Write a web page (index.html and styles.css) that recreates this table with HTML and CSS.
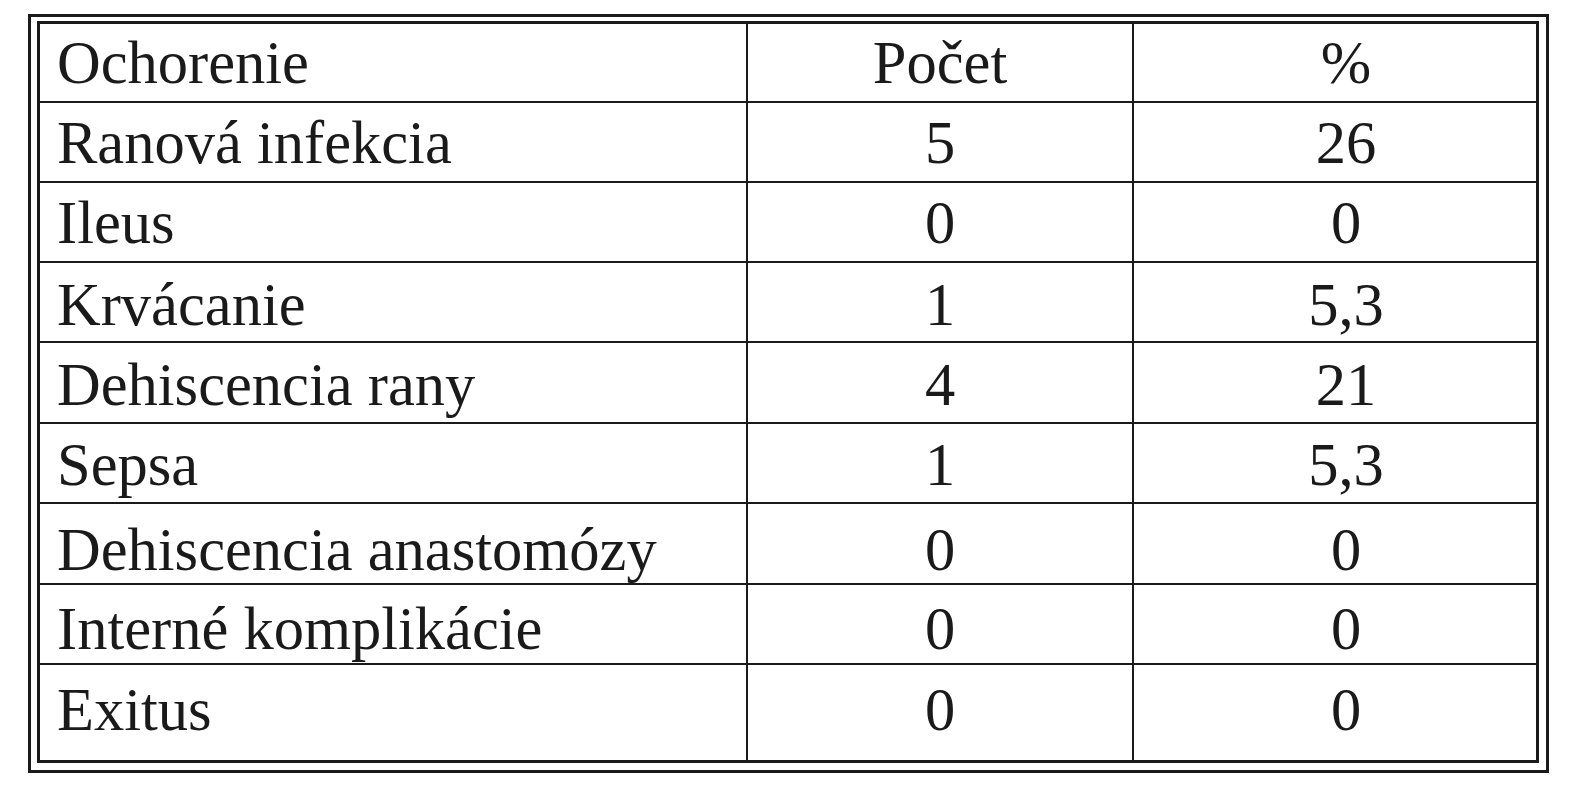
FILE: index.html
```html
<!DOCTYPE html>
<html lang="sk">
<head>
<meta charset="utf-8">
<title>Komplikácie</title>
<link rel="stylesheet" href="styles.css">
</head>
<body>
<div class="frame">
  <div class="grid">
    <div class="row"><div class="cell c1">Ochorenie</div><div class="cell c2">Počet</div><div class="cell c3">%</div></div>
    <div class="row"><div class="cell c1">Ranová infekcia</div><div class="cell c2">5</div><div class="cell c3">26</div></div>
    <div class="row"><div class="cell c1">Ileus</div><div class="cell c2">0</div><div class="cell c3">0</div></div>
    <div class="row"><div class="cell c1">Krvácanie</div><div class="cell c2">1</div><div class="cell c3">5,3</div></div>
    <div class="row"><div class="cell c1">Dehiscencia rany</div><div class="cell c2">4</div><div class="cell c3">21</div></div>
    <div class="row"><div class="cell c1">Sepsa</div><div class="cell c2">1</div><div class="cell c3">5,3</div></div>
    <div class="row"><div class="cell c1">Dehiscencia anastomózy</div><div class="cell c2">0</div><div class="cell c3">0</div></div>
    <div class="row"><div class="cell c1">Interné komplikácie</div><div class="cell c2">0</div><div class="cell c3">0</div></div>
    <div class="row last"><div class="cell c1">Exitus</div><div class="cell c2">0</div><div class="cell c3">0</div></div>
  </div>
</div>
</body>
</html>
```

FILE: styles.css
```css
html, body {
  margin: 0;
  padding: 0;
  background: #ffffff;
}

body {
  font-family: "Liberation Serif", "Times New Roman", serif;
  color: #1a1a1a;
}

.frame {
  margin: 14px 0 0 28px;
  width: fit-content;
  border: 3px solid #1a1a1a;
  padding: 4px 7px 7px 6px;
}

.grid {
  display: grid;
  grid-template-columns: 708px 386px 402px;
  grid-template-rows: 79px 80px 80px 80px 81px 80px 81px 80px 95px;
  border: 3px solid #1a1a1a;
}

.row {
  display: contents;
}

.cell {
  box-sizing: border-box;
  border-bottom: 2px solid #1a1a1a;
  border-right: 2px solid #1a1a1a;
  font-size: 60.5px;
  line-height: 60px;
  padding-top: 12px;
  white-space: nowrap;
}

.row.last .cell {
  border-bottom: none;
}

.c1 {
  padding-left: 17px;
}

.c2 {
  text-align: center;
}

.c3 {
  text-align: center;
  padding-left: 22px;
  border-right: none;
}

.row:nth-child(1) .cell { padding-top: 9px; }
.row:nth-child(2) .cell { padding-top: 10px; }
.row:nth-child(3) .cell { padding-top: 10px; }
.row:nth-child(4) .cell { padding-top: 12px; }
.row:nth-child(5) .cell { padding-top: 12px; }
.row:nth-child(6) .cell { padding-top: 11px; }
.row:nth-child(7) .cell { padding-top: 16px; }
.row:nth-child(8) .cell { padding-top: 14px; }
.row:nth-child(9) .cell { padding-top: 15px; }
```
